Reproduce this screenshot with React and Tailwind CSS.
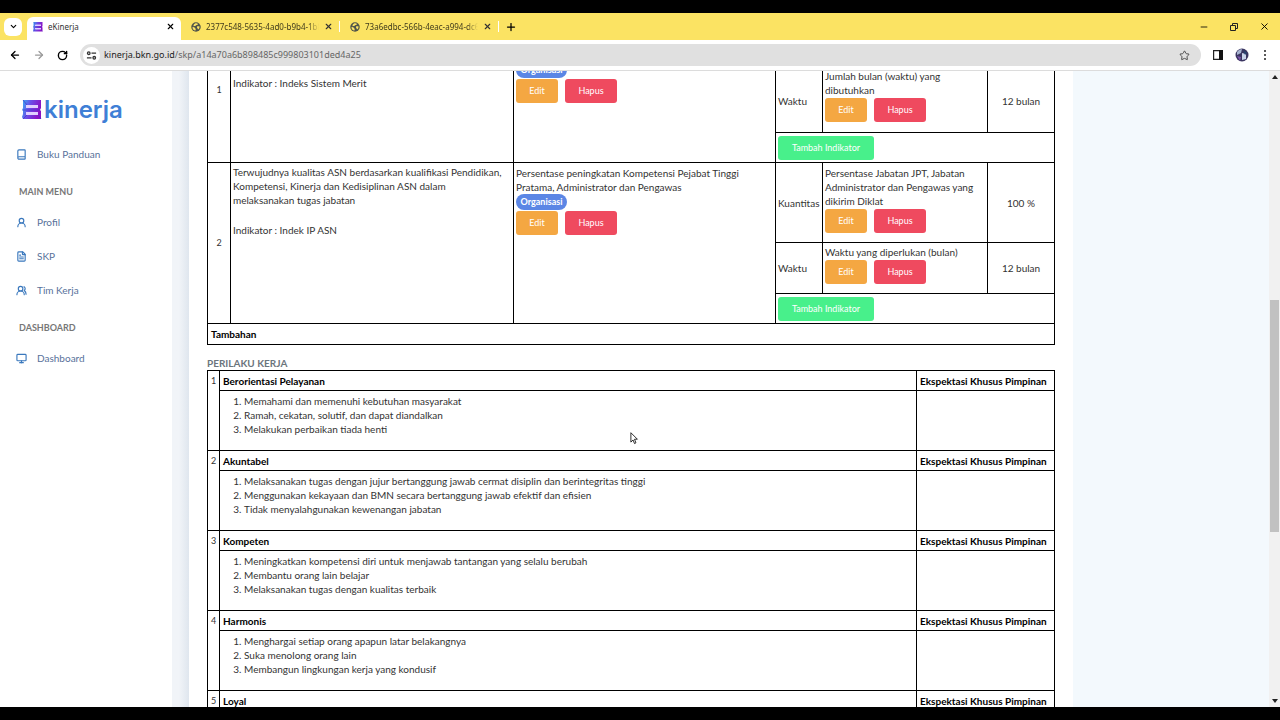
import {
  ArrowLeft,
  ArrowRight,
  Book,
  ChevronDown,
  FileText,
  Minus,
  Monitor,
  Plus,
  RotateCw,
  Star,
  UserRound,
  UsersRound,
  X,
} from 'lucide-react';

const behaviours = [
  {
    title: 'Berorientasi Pelayanan',
    points: [
      'Memahami dan memenuhi kebutuhan masyarakat',
      'Ramah, cekatan, solutif, dan dapat diandalkan',
      'Melakukan perbaikan tiada henti',
    ],
  },
  {
    title: 'Akuntabel',
    points: [
      'Melaksanakan tugas dengan jujur bertanggung jawab cermat disiplin dan berintegritas tinggi',
      'Menggunakan kekayaan dan BMN secara bertanggung jawab efektif dan efisien',
      'Tidak menyalahgunakan kewenangan jabatan',
    ],
  },
  {
    title: 'Kompeten',
    points: [
      'Meningkatkan kompetensi diri untuk menjawab tantangan yang selalu berubah',
      'Membantu orang lain belajar',
      'Melaksanakan tugas dengan kualitas terbaik',
    ],
  },
  {
    title: 'Harmonis',
    points: [
      'Menghargai setiap orang apapun latar belakangnya',
      'Suka menolong orang lain',
      'Membangun lingkungan kerja yang kondusif',
    ],
  },
  { title: 'Loyal', points: [] },
];

const EkinerjaMark = ({ className }) => (
  <svg viewBox="0 0 20 20" className={className} aria-hidden="true">
    <defs>
      <linearGradient id="mark" x1="0" y1="0" x2="1" y2="0.3">
        <stop offset="0" stopColor="#35b4f5" />
        <stop offset="0.45" stopColor="#6a4ee8" />
        <stop offset="1" stopColor="#8a12c4" />
      </linearGradient>
    </defs>
    <path d="M1 0h18v8l-1 2 1 1v8H1l-1-2 1-3v-3l-1-1 1-2z" fill="url(#mark)" />
    <path d="M4 5h12v3H4zM4 12h12v3H4z" fill="#e0cfff" />
    <path d="M1 0l4 5M1 19l4-4M19 19l-3-4M1 10h17" stroke="#4a2fc9" strokeWidth="0.7" />
  </svg>
);

const Globe = () => (
  <svg viewBox="0 0 20 20" className="size-[10px] shrink-0" aria-hidden="true">
    <circle cx="10" cy="10" r="9.5" fill="#50554a" />
    <path d="M3 10c2 0 4 0 5 2s2 2 1 5c-4 0-6-3-6-7zM8 3c3-1 5 0 6 1-1 2-2 2-3 2s-1 2-3 2-2 1-3 0c0-2 1-4 3-5zM12 9c2-1 4-1 5 0 0 4-1 5-3 6-1-2-1-3-2-4z" fill="#fbe363" />
  </svg>
);

const Tab = ({ title }) => (
  <div className="flex w-[158px] shrink-0 items-center gap-[5px] pl-[10px] pr-[6px]">
    <Globe />
    <span className="w-[113px] overflow-hidden whitespace-nowrap text-[8px] text-[#3f3a1c] mask-r-from-90%">
      {title}
    </span>
    <button type="button" aria-label="Close tab" className="ml-auto text-[#333]">
      <X size={9} strokeWidth={3} />
    </button>
  </div>
);

const BrowserBar = () => (
  <header className="shrink-0 border-b border-[#dcdcdc] bg-white font-['Noto_Sans',sans-serif]">
    <div className="flex h-[27px] items-stretch bg-[#fbe363]">
      <button type="button" aria-label="Search tabs" className="my-auto ml-1 flex size-[18px] items-center justify-center rounded-md bg-white">
        <ChevronDown size={9} strokeWidth={3} />
      </button>
      <div className="ml-[5px] mt-1 flex w-[154px] items-center gap-[5px] rounded-t-md bg-white pb-1 pl-[6px] pr-[6px]">
        <EkinerjaMark className="size-[10px]" />
        <span className="text-[8px] text-[#333]">eKinerja</span>
        <button type="button" aria-label="Close tab" className="ml-auto">
          <X size={9} strokeWidth={3} />
        </button>
      </div>
      <Tab title="2377c548-5635-4ad0-b9b4-1b8" />
      <div className="my-auto h-[11px] w-px bg-white" />
      <Tab title="73a6edbc-566b-4eac-a994-dc6" />
      <div className="my-auto h-[11px] w-px bg-white" />
      <button type="button" aria-label="New tab" className="ml-[6px]">
        <Plus size={12} strokeWidth={2.5} />
      </button>
      <div className="ml-auto flex items-center gap-5 pr-[10px]">
        <button type="button" aria-label="Minimize">
          <Minus size={10} />
        </button>
        <button type="button" aria-label="Restore">
          <svg viewBox="0 0 10 10" className="size-[10px]" fill="none" stroke="#222">
            <path d="M1.5 3.5h5v5h-5zM3.5 3V1.5h5v5H7" />
          </svg>
        </button>
        <button type="button" aria-label="Close">
          <X size={11} />
        </button>
      </div>
    </div>
    <div className="flex h-[30px] items-center pl-[9px] pr-[13px]">
      <button type="button" aria-label="Back" className="mr-3">
        <ArrowLeft size={12} strokeWidth={2.5} />
      </button>
      <button type="button" aria-label="Forward" className="mr-3 text-[#9a9a9a]">
        <ArrowRight size={12} strokeWidth={2.5} />
      </button>
      <button type="button" aria-label="Reload" className="mr-3">
        <RotateCw size={11} strokeWidth={3} />
      </button>
      <div className="flex h-[22px] flex-1 items-center rounded-full bg-[#e0e0e0] pl-[3px] pr-[11px] text-[9px]">
        <span className="mr-1 flex size-[17px] items-center justify-center rounded-full bg-white">
          <svg viewBox="0 0 12 12" className="size-[11px]" fill="none" stroke="#333" strokeWidth="1.4">
            <circle cx="3" cy="3.5" r="1.4" />
            <path d="M6 3.5h5M1 8.5h5" />
            <circle cx="9" cy="8.5" r="1.4" />
          </svg>
        </span>
        <span className="text-[#222]">kinerja.bkn.go.id</span>
        <span className="text-[#666]">/skp/a14a70a6b898485c999803101ded4a25</span>
        <button type="button" aria-label="Bookmark" className="ml-auto text-[#444]">
          <Star size={11} />
        </button>
      </div>
      <button type="button" aria-label="Side panel" className="ml-3">
        <svg viewBox="0 0 10 10" className="size-[10px]">
          <path d="M0.6 0.6h8.8v8.8H0.6z" fill="none" stroke="#222" strokeWidth="1.2" />
          <path d="M6 0h4v10H6z" fill="#111" />
        </svg>
      </button>
      <button type="button" aria-label="Profile" className="ml-3">
        <svg viewBox="0 0 14 14" className="size-[14px]">
          <circle cx="7" cy="7" r="6.5" fill="#3a3560" />
          <path d="M2 4a6 6 0 0 1 5-3l-1 4-4 2z" fill="#a7b4d0" />
          <path d="M7 5l4 1v5l-4 1z" fill="#c9d4ea" />
          <path d="M2 8l4 1-1 4z" fill="#7a55a8" />
          <path d="M8 2l4 3-2 2z" fill="#27456e" />
        </svg>
      </button>
      <button type="button" aria-label="Menu" className="ml-[14px]">
        <svg viewBox="0 0 4 12" className="h-3 w-1" fill="#222">
          <circle cx="2" cy="2" r="1" />
          <circle cx="2" cy="6" r="1" />
          <circle cx="2" cy="10" r="1" />
        </svg>
      </button>
    </div>
  </header>
);

const MenuLink = ({ icon: Icon, children }) => (
  <a href="#" className="flex h-[34px] items-center gap-[10px] text-[10px] text-[#57719a]">
    <Icon strokeWidth={2.5} className="size-[11px] text-[#3a78bd]" />
    {children}
  </a>
);

const MenuHeading = ({ children }) => (
  <h2 className="flex h-[34px] items-center pl-[3px] pt-[7px] text-[9px] font-bold text-[#777]">{children}</h2>
);

const Sidebar = () => (
  <nav className="w-[172px] shrink-0 bg-white pl-4">
    <div className="flex items-center gap-[2px] pb-[11px] pl-[6px] pt-[23px]">
      <EkinerjaMark className="size-5" />
      <span className="font-['Inter',sans-serif] text-[24px] font-semibold leading-8 text-[#3f7fd6]">kinerja</span>
    </div>
    <MenuLink icon={Book}>Buku Panduan</MenuLink>
    <MenuHeading>MAIN MENU</MenuHeading>
    <MenuLink icon={UserRound}>Profil</MenuLink>
    <MenuLink icon={FileText}>SKP</MenuLink>
    <MenuLink icon={UsersRound}>Tim Kerja</MenuLink>
    <MenuHeading>DASHBOARD</MenuHeading>
    <MenuLink icon={Monitor}>Dashboard</MenuLink>
  </nav>
);

const RowActions = () => (
  <div className="flex gap-[7px] pt-px text-[9px] text-white">
    <button type="button" className="h-6 w-[42px] rounded-[3px] bg-[#f4a742]">Edit</button>
    <button type="button" className="h-6 w-[52px] rounded-[3px] bg-[#ef4a5f]">Hapus</button>
  </div>
);

const OrgBadge = () => (
  <span className="flex h-4 w-[51px] items-center justify-center rounded-full bg-[#5b86e5] text-[9px] font-bold text-white">
    Organisasi
  </span>
);

const AddIndicatorRow = () => (
  <tr className="h-[30px]">
    <td colSpan={3} className="border border-black px-[2px]">
      <button type="button" className="block h-6 w-24 rounded-[3px] bg-[#48f08b] text-[9px] text-white">
        Tambah Indikator
      </button>
    </td>
  </tr>
);

const WorkResults = () => (
  <table className="w-full table-fixed border-collapse text-[#333]">
    <colgroup>
      <col className="w-[23px]" />
      <col />
      <col className="w-[262px]" />
      <col className="w-[47px]" />
      <col className="w-[165px]" />
      <col className="w-[67px]" />
    </colgroup>
    <tbody>
      <tr className="h-[52px]">
        <td rowSpan={3} className="border border-black text-center text-[9px]">1</td>
        <td rowSpan={3} className="border border-black pl-[2px] pr-2 pt-[59px] align-top">
          Indikator : Indeks Sistem Merit
        </td>
        <td rowSpan={3} className="border border-black px-[2px] pt-[45px] align-top">
          <OrgBadge />
          <RowActions />
        </td>
        <td className="border border-black" />
        <td className="border border-black" />
        <td className="border border-black" />
      </tr>
      <tr className="h-16">
        <td className="border border-black px-[2px]">Waktu</td>
        <td className="border border-black px-[2px] align-top">
          Jumlah bulan (waktu) yang dibutuhkan
          <RowActions />
        </td>
        <td className="border border-black text-center">12 bulan</td>
      </tr>
      <AddIndicatorRow />
      <tr className="h-20">
        <td rowSpan={3} className="border border-black text-center text-[9px]">2</td>
        <td rowSpan={3} className="border border-black pl-[2px] pr-2 pt-[2px] align-top">
          <p>Terwujudnya kualitas ASN berdasarkan kualifikasi Pendidikan, Kompetensi, Kinerja dan Kedisiplinan ASN dalam melaksanakan tugas jabatan</p>
          <p className="mt-4">Indikator : Indek IP ASN</p>
        </td>
        <td rowSpan={3} className="border border-black px-[2px] pt-[3px] align-top">
          Persentase peningkatan Kompetensi Pejabat Tinggi Pratama, Administrator dan Pengawas
          <OrgBadge />
          <RowActions />
        </td>
        <td className="border border-black px-[2px]">Kuantitas</td>
        <td className="border border-black px-[2px] pt-[3px] align-top">
          Persentase Jabatan JPT, Jabatan Administrator dan Pengawas yang dikirim Diklat
          <RowActions />
        </td>
        <td className="border border-black text-center">100 %</td>
      </tr>
      <tr className="h-[51px]">
        <td className="border border-black px-[2px]">Waktu</td>
        <td className="border border-black px-[2px] pt-[2px] align-top">
          Waktu yang diperlukan (bulan)
          <RowActions />
        </td>
        <td className="border border-black text-center">12 bulan</td>
      </tr>
      <AddIndicatorRow />
      <tr className="h-[21px]">
        <th colSpan={6} scope="row" className="border border-black px-[3px] text-left font-bold text-black">
          Tambahan
        </th>
      </tr>
    </tbody>
  </table>
);

const WorkBehaviours = () => (
  <table className="w-full table-fixed border-collapse text-[#333]">
    <colgroup>
      <col className="w-3" />
      <col />
      <col className="w-[138px]" />
    </colgroup>
    {behaviours.map((item, index) => (
      <tbody key={item.title}>
        <tr className="h-5">
          <td rowSpan={2} className="border border-black pt-[3px] text-center align-top text-[9px]">
            {index + 1}
          </td>
          <th scope="col" className="border border-black px-[3px] text-left font-bold text-black">{item.title}</th>
          <th scope="col" className="border border-black px-[3px] text-left font-bold text-black">
            Ekspektasi Khusus Pimpinan
          </th>
        </tr>
        <tr className="h-[60px]">
          <td className="border border-black pl-6 pt-[3px] align-top">
            <ol className="list-decimal">
              {item.points.map((point) => (
                <li key={point}>{point}</li>
              ))}
            </ol>
          </td>
          <td className="border border-black" />
        </tr>
      </tbody>
    ))}
  </table>
);

const Scrollbar = () => (
  <div className="flex w-[11px] shrink-0 flex-col items-center bg-[#f1f1f1] py-1" aria-hidden="true">
    <svg viewBox="0 0 6 4" className="h-1 w-[6px]"><path d="M3 0l3 4H0z" fill="#222" /></svg>
    <div className="flex-[221]" />
    <div className="w-[9px] flex-[232] bg-[#c1c1c1]" />
    <div className="flex-[167]" />
    <svg viewBox="0 0 6 4" className="h-1 w-[6px]"><path d="M3 4l3-4H0z" fill="#222" /></svg>
  </div>
);

const App = () => {
  return (
    <div className="relative flex h-screen flex-col overflow-hidden bg-black py-[13px] font-['Lato',sans-serif] text-[10px] leading-[14px]">
      <BrowserBar />

      <div className="flex min-h-0 flex-1 bg-[#f3f9fd]">
        <Sidebar />
        <div className="w-[17px] shrink-0 bg-linear-to-r from-[#f1f4f8] from-40% to-[#dfe6ee]" />

        {/* Scrolled content */}
        <div className="min-w-0 flex-1 overflow-hidden">
          <main className="-mt-[55px] max-w-[884px] bg-white px-[18px]">
            <WorkResults />
            <h2 className="pt-[11px] font-bold text-[#6c757d]">PERILAKU KERJA</h2>
            <WorkBehaviours />
          </main>
        </div>

        <Scrollbar />
      </div>

      {/* Mouse pointer */}
      <svg viewBox="0 0 12 18" className="absolute left-[630px] top-[432px] h-[13px] w-[9px]" aria-hidden="true">
        <path d="M1 1v13l3-3 2 5 2-1-2-5h4z" fill="#fff" stroke="#111" strokeWidth="1.2" />
      </svg>
    </div>
  );
};

export default App;
